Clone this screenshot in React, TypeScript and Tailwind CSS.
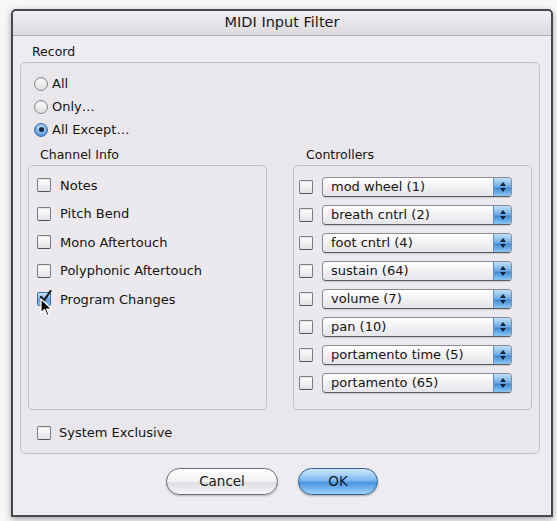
import React from "react";

const font = { fontFamily: '"DejaVu Sans", "Liberation Sans", sans-serif' };

function Radio({ checked }: { checked?: boolean }) {
  return checked ? (
    <span className="relative flex h-[14px] w-[14px] items-center justify-center rounded-full border border-[#3d6fa8] bg-[radial-gradient(circle_at_50%_35%,#d6ecff_0%,#7db5e8_45%,#3b7fcb_100%)]">
      <span className="h-[5px] w-[5px] rounded-full bg-[#1b2a3d]" />
    </span>
  ) : (
    <span className="h-[14px] w-[14px] rounded-full border border-[#8d8b90] bg-[linear-gradient(#ffffff,#dcdadd)] shadow-[inset_0_1px_1px_rgba(0,0,0,0.15)]" />
  );
}

function Check({ checked }: { checked?: boolean }) {
  if (checked) {
    return (
      <span className="relative flex h-[14px] w-[14px] items-center justify-center rounded-[2px] border border-[#3d6fa8] bg-[linear-gradient(#cfe6fb,#5f9fdc_60%,#8ec3ef)]">
        <svg width="13" height="13" viewBox="0 0 13 13" className="absolute -top-[3px] left-[1px]">
          <path d="M2 7 L5 10.5 L11.5 1" fill="none" stroke="#111" strokeWidth="2.2" strokeLinecap="round" strokeLinejoin="round" />
        </svg>
      </span>
    );
  }
  return (
    <span className="h-[14px] w-[14px] rounded-[2px] border border-[#7f7d83] border-b-[#55535a] bg-[linear-gradient(#ffffff,#e4e2e6)] shadow-[inset_0_1px_1px_rgba(0,0,0,0.1)]" />
  );
}

function Popup({ label }: { label: string }) {
  return (
    <div className="flex h-[20px] w-[190px] items-stretch overflow-hidden rounded-[4px] border border-[#8e8c92] border-b-[#5f5d63] bg-[linear-gradient(#ffffff,#f1f0f3_50%,#e6e5e9)] shadow-[0_1px_1px_rgba(0,0,0,0.15)]">
      <span className="flex flex-1 items-center pl-[8px] text-[13px] text-[#141414]">{label}</span>
      <span className="flex w-[18px] flex-col items-center justify-center gap-[2px] border-l border-[#5e8fc4] bg-[linear-gradient(#bfe0fb,#6aaae6_50%,#3f8ad6_55%,#8cc6f4)]">
        <svg width="6" height="4" viewBox="0 0 6 4"><path d="M0 4 L3 0 L6 4 Z" fill="#1a2233" /></svg>
        <svg width="6" height="4" viewBox="0 0 6 4"><path d="M0 0 L3 4 L6 0 Z" fill="#1a2233" /></svg>
      </span>
    </div>
  );
}

const channels = ["Notes", "Pitch Bend", "Mono Aftertouch", "Polyphonic Aftertouch", "Program Changes"];
const controllers = [
  "mod wheel (1)",
  "breath cntrl (2)",
  "foot cntrl (4)",
  "sustain (64)",
  "volume (7)",
  "pan (10)",
  "portamento time (5)",
  "portamento (65)",
];

export default function App() {
  return (
    <div className="h-[521px] w-[557px] overflow-hidden bg-[#f7f6f8] pl-[11px] pt-[9px]" style={font}>
      <div className="relative flex h-[508px] w-[542px] flex-col rounded-t-[5px] border-2 border-[#48474c] bg-[#eeecf0] text-[#141414] shadow-[0_2px_6px_rgba(0,0,0,0.35)]">
        {/* title bar */}
        <div className="flex h-[25px] items-center justify-center rounded-t-[4px] border-b border-[#b3b1b6] bg-[linear-gradient(#f0eef2,#dddbe0)] text-[14.5px] text-[#1a1a1a]">
          MIDI Input Filter
        </div>

        <div className="mt-[8px] flex h-[16px] items-center pl-[19px] text-[12.5px]">Record</div>

        {/* record group box */}
        <div className="ml-[7px] mt-[2px] flex h-[392px] w-[520px] flex-col rounded-[5px] border border-[#c6c4c9] bg-[#e9e7eb]">
          <div className="mt-[10px] flex flex-col pl-[13px] text-[13px]">
            <div className="flex h-[22px] items-center gap-[4px]"><Radio /><span>All</span></div>
            <div className="flex h-[23px] items-center gap-[4px]"><Radio /><span>Only…</span></div>
            <div className="flex h-[23px] items-center gap-[4px]"><Radio checked /><span>All Except…</span></div>
          </div>

          <div className="mt-[6px] flex h-[16px] items-center text-[12.5px]">
            <span className="ml-[19px] w-[266px]">Channel Info</span>
            <span>Controllers</span>
          </div>

          <div className="mt-[2px] flex">
            {/* channel info */}
            <div className="relative ml-[7px] flex h-[245px] w-[239px] flex-col rounded-[5px] border border-[#c3c1c6] bg-[#ebe9ed] pl-[8px] pt-[5px] text-[13px]">
              {channels.map((c, i) => (
                <div key={c} className="flex h-[28.5px] items-center gap-[9px]">
                  <Check checked={i === 4} />
                  <span>{c}</span>
                </div>
              ))}
              {/* mouse cursor */}
              <svg width="14" height="20" viewBox="0 0 14 20" className="absolute left-[11px] top-[132px]">
                <path d="M1 1 L1 15 L4.5 11.5 L7 17.5 L9 16.7 L6.6 11 L11.5 11 Z" fill="#000" stroke="#fff" strokeWidth="1.2" strokeLinejoin="round" />
              </svg>
            </div>

            {/* controllers */}
            <div className="ml-[26px] flex h-[245px] w-[239px] flex-col rounded-[5px] border border-[#c3c1c6] bg-[#ebe9ed] pl-[5px] pt-[7px]">
              {controllers.map((c) => (
                <div key={c} className="flex h-[28px] items-center gap-[9px]">
                  <Check />
                  <Popup label={c} />
                </div>
              ))}
            </div>
          </div>

          <div className="mt-[14px] flex h-[18px] items-center gap-[8px] pl-[16px] text-[13px]">
            <Check />
            <span>System Exclusive</span>
          </div>
        </div>

        {/* buttons */}
        <div className="ml-[153px] mt-[14px] flex gap-[20px] text-[13.5px]">
          <button className="flex h-[27px] w-[112px] items-center justify-center rounded-full border-[1.5px] border-[#6f6d73] bg-[linear-gradient(#ffffff,#f2f1f4_50%,#dedde1_55%,#f6f5f8)] text-[#1a1a1a] shadow-[0_1px_2px_rgba(0,0,0,0.25)]">
            Cancel
          </button>
          <button className="flex h-[27px] w-[80px] items-center justify-center rounded-full border-[1.5px] border-[#2f5f98] bg-[linear-gradient(#cfe8fd,#7fbaf0_45%,#4a95df_55%,#9fd2fb)] text-[#0e1c33] shadow-[0_1px_2px_rgba(0,0,0,0.3)]">
            OK
          </button>
        </div>
      </div>
    </div>
  );
}
